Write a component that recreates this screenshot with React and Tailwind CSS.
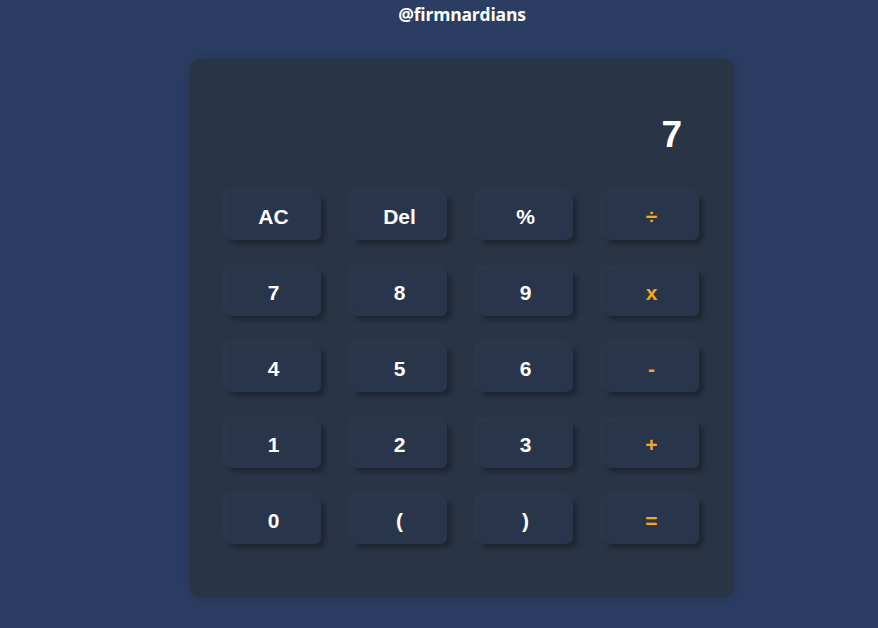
const keys = [
  ["AC", "Del", "%", "÷"],
  ["7", "8", "9", "x"],
  ["4", "5", "6", "-"],
  ["1", "2", "3", "+"],
  ["0", "(", ")", "="],
];

export default function App() {
  return (
    <div className="min-h-screen bg-[#2b3d62] pl-[46px] flex flex-col items-center font-['Liberation_Sans',Arial,sans-serif]">
      <h1 className="mt-[3px] h-[22px] text-[17.5px] leading-[22px] font-bold text-white font-['Open_Sans',sans-serif] tracking-[-0.2px]">
        @firmnardians
      </h1>

      <div className="mt-[34px] w-[544px] rounded-[10px] bg-[#293446] px-[36px] pb-[54px] shadow-[0_0_14px_rgba(0,0,0,0.15)]">
        {/* display */}
        <div className="h-[134px] pt-[56px] pr-[16px] text-right text-[37px] leading-10 font-bold text-white">
          7
        </div>

        <div className="grid grid-cols-[repeat(4,95px)] gap-x-[31px] gap-y-[29px]">
          {keys.flat().map((k, i) => {
            const isOp = i % 4 === 3;
            return (
              <button
                key={k}
                className={`h-[47px] w-[95px] rounded-[6px] bg-[#29354a] text-[21px] font-bold shadow-[4px_4px_5px_rgba(0,0,0,0.3),-3px_-3px_6px_rgba(255,255,255,0.03)] ${
                  isOp ? "text-[#f9a61a]" : "text-white"
                }`}
              >
                {k}
              </button>
            );
          })}
        </div>
      </div>
    </div>
  );
}
